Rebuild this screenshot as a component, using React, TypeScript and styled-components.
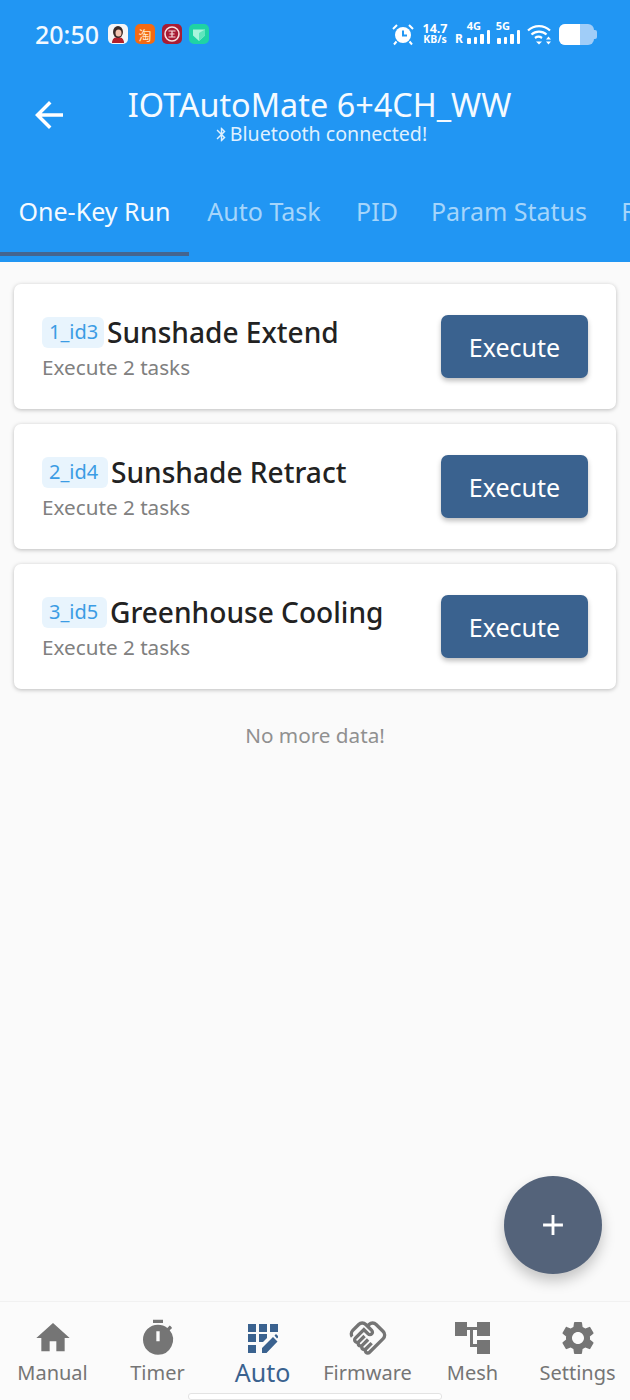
import React from "react";
import styled, { createGlobalStyle } from "styled-components";
import { MdHome, MdTimer, MdOutlineHandshake, MdSettings, MdArrowBack, MdBluetooth, MdAdd } from "react-icons/md";

const Global = createGlobalStyle`
  html, body { margin: 0; padding: 0; background: #fafafa; }
  * { box-sizing: border-box; }
  body { font-family: "Noto Sans", "Open Sans", sans-serif; }
`;

const Page = styled.div`
  position: relative;
  width: 630px;
  height: 1400px;
  display: flex;
  flex-direction: column;
  overflow: hidden;
  background: #fafafa;
`;

const Header = styled.header`
  height: 262px;
  flex: none;
  background: #2196f3;
  color: #fff;
  display: flex;
  flex-direction: column;
`;

const StatusBar = styled.div`
  height: 68px;
  margin-bottom: 2px;
  padding: 0 34px 0 35px;
  display: flex;
  align-items: center;
  justify-content: space-between;
`;

const StatusGroup = styled.div<{ $gap: number }>`
  display: flex;
  align-items: center;
  gap: ${(p) => p.$gap}px;
`;

const Clock = styled.span`
  width: 66px;
  font-size: 25px;
  font-weight: 500;
  color: #f2f9ff;
  white-space: nowrap;
`;

const AppBadge = styled.span<{ $bg: string; $fg: string }>`
  width: 20px;
  height: 20px;
  border-radius: 5px;
  display: flex;
  align-items: center;
  justify-content: center;
  overflow: hidden;
  background: ${(p) => p.$bg};
  color: ${(p) => p.$fg};
  font-size: 13px;
  font-family: "Noto Sans CJK SC", sans-serif;
  line-height: 1;
`;

const Speed = styled.div`
  width: 26px;
  display: flex;
  flex-direction: column;
  align-items: center;
  font-weight: 700;
  line-height: 11px;
  white-space: nowrap;
`;

const SpeedLine = styled.span<{ $big?: boolean }>`
  font-size: ${(p) => (p.$big ? 12.6 : 10.5)}px;
`;

const Signal = styled.div<{ $w: number }>`
  position: relative;
  width: ${(p) => p.$w}px;
  height: 24px;
  display: flex;
  align-items: flex-end;
  justify-content: flex-end;
  gap: 3px;
  padding-bottom: 2px;
`;

const SignalLabel = styled.span<{ $right: number }>`
  position: absolute;
  right: ${(p) => p.$right}px;
  top: -1px;
  font-size: 11px;
  font-weight: 700;
  line-height: 10px;
`;

const RoamMark = styled.span`
  position: absolute;
  left: 0;
  bottom: 2px;
  font-size: 12px;
  font-weight: 700;
  line-height: 10px;
`;

const SignalBar = styled.span<{ $h: number }>`
  width: 3.5px;
  height: ${(p) => p.$h}px;
  background: #fff;
  border-radius: 1px;
`;

const Battery = styled.div`
  position: relative;
  width: 35px;
  height: 21px;
  margin-right: 2px;
  border-radius: 6px;
  background: #a0cdf8;

  &::after {
    content: "";
    position: absolute;
    right: -3px;
    top: 6px;
    width: 3px;
    height: 9px;
    border-radius: 0 2px 2px 0;
    background: #a0cdf8;
  }
`;

const BatteryFill = styled.div`
  width: 21px;
  height: 100%;
  border-radius: 6px 0 0 6px;
  background: #fff;
`;

const AppBar = styled.div`
  height: 86px;
  position: relative;
  display: flex;
  flex-direction: column;
  align-items: center;
  padding-top: 14px;
`;

const BackButton = styled.span`
  position: absolute;
  left: 28px;
  top: 24px;
  display: flex;
  font-size: 42px;
`;

const Title = styled.div`
  font-size: 32.4px;
  line-height: 41px;
  margin-left: 9px;
  color: #f4faff;
  white-space: nowrap;
`;

const Subtitle = styled.div`
  font-size: 19.6px;
  line-height: 18px;
  display: flex;
  align-items: center;
  margin-left: 10px;
  color: #dff0fe;
`;

const Tabs = styled.nav`
  flex: 1;
  display: flex;
  overflow: hidden;
  padding-top: 24px;
`;

const Tab = styled.span<{ $active?: boolean; $w: number }>`
  flex: none;
  width: ${(p) => p.$w}px;
  height: 76px;
  padding-top: 14px;
  text-align: center;
  font-size: 25px;
  line-height: 34px;
  white-space: nowrap;
  color: ${(p) => (p.$active ? "#f4faff" : "#a5d5fb")};
  border-bottom: 4px solid ${(p) => (p.$active ? "#45658f" : "transparent")};
`;

const List = styled.main`
  flex: 1;
  padding: 22px 14px 0;
  display: flex;
  flex-direction: column;
  gap: 15px;
`;

const Card = styled.section`
  height: 125px;
  background: #fff;
  border-radius: 7px;
  box-shadow: 0 1px 4px rgba(0, 0, 0, 0.25);
  padding: 0 28px;
  display: flex;
  align-items: center;
  justify-content: space-between;
`;

const CardText = styled.div`
  display: flex;
  flex-direction: column;
  padding-top: 1px;
`;

const CardHead = styled.div`
  display: flex;
  align-items: center;
  gap: 3px;
  margin-top: 1px;
`;

const Tag = styled.span<{ $w: number }>`
  width: ${(p) => p.$w}px;
  height: 31px;
  padding: 0 7px;
  border-radius: 6px;
  background: #e8f4fd;
  color: #3b9ce4;
  font-size: 20px;
  line-height: 30px;
  white-space: nowrap;
`;

const CardTitle = styled.span`
  font-size: 28.1px;
  font-weight: 500;
  color: #222;
  line-height: 36px;
  white-space: nowrap;
`;

const CardSub = styled.span`
  font-size: 20.7px;
  color: #808080;
  line-height: 28px;
  margin-top: 3px;
`;

const ExecuteButton = styled.button`
  width: 147px;
  height: 63px;
  border: 0;
  border-radius: 7px;
  background: #3a628f;
  color: #fff;
  font: inherit;
  font-size: 25px;
  box-shadow: 0 3px 5px rgba(0, 0, 0, 0.25);
`;

const EndNote = styled.div`
  margin-top: 17px;
  text-align: center;
  font-size: 20.7px;
  line-height: 28px;
  color: #909090;
`;

const Fab = styled.button`
  position: absolute;
  left: 504px;
  top: 1176px;
  width: 98px;
  height: 98px;
  border: 0;
  border-radius: 50%;
  background: #54637a;
  color: #fff;
  font-size: 34px;
  display: flex;
  align-items: center;
  justify-content: center;
  box-shadow: 0 7px 14px rgba(0, 0, 0, 0.22);
`;

const BottomNav = styled.nav`
  height: 99px;
  flex: none;
  border-top: 1px solid #f1f1f1;
  display: grid;
  grid-template-columns: repeat(6, 105px);
  background: #fbfbfb;
`;

const NavItem = styled.div<{ $active?: boolean }>`
  display: flex;
  flex-direction: column;
  align-items: center;
  padding-top: 16px;
  color: ${(p) => (p.$active ? "#3a628f" : "#757575")};
`;

const NavIcon = styled.span`
  height: 40px;
  display: flex;
  align-items: center;
  justify-content: center;
  font-size: 40px;
`;

const NavLabel = styled.span<{ $active?: boolean }>`
  font-size: ${(p) => (p.$active ? 25 : 20)}px;
  line-height: 30px;
  margin-top: ${(p) => (p.$active ? -1 : 0)}px;
  white-space: nowrap;
`;

const HomeBar = styled.div`
  position: absolute;
  left: 188px;
  top: 1393px;
  width: 254px;
  height: 7px;
  border: 1px solid #e3e3e3;
  border-radius: 3px;
  background: #fff;
`;

const AvatarGlyph = () => (
  <svg width="20" height="20" viewBox="0 0 20 20">
    <path d="M4 19c0-4 2.500-6 6-6s6 2 6 6z" fill="#b3202a" />
    <ellipse cx="10" cy="8" rx="5" ry="6" fill="#3a2a28" />
    <ellipse cx="10.500" cy="9" rx="3" ry="3.500" fill="#f3c4b0" />
  </svg>
);

const BankGlyph = () => (
  <svg width="20" height="20" viewBox="0 0 20 20" fill="none" stroke="#f7dfe0">
    <circle cx="10" cy="10" r="7" strokeWidth="1.600" />
    <path d="M6.500 7h7M6.500 13h7M7.500 10h5M10 7v6" strokeWidth="1.200" />
  </svg>
);

const GemGlyph = () => (
  <svg width="20" height="20" viewBox="0 0 20 20">
    <path d="M4 5.500h12v6L10 17l-6-5.500z" fill="#a8f5dc" />
    <path d="M10 9l6-3.500v6L10 17z" fill="#5fe6bd" />
  </svg>
);

const AlarmGlyph = () => (
  <svg width="24" height="24" viewBox="0 0 24 24">
    <circle cx="12" cy="13" r="8" fill="#fff" />
    <path d="M12 8.500V13.500h4" fill="none" stroke="#2196f3" strokeWidth="2" />
    <path d="M2 7l4-4M22 7l-4-4M5.500 19.500l-2.500 3M18.500 19.500l2.500 3" fill="none" stroke="#fff" strokeWidth="2" />
  </svg>
);

const WifiGlyph = () => (
  <svg width="25" height="22" viewBox="0 0 25 22" fill="none" stroke="#fff" strokeWidth="2.200">
    <path d="M1 7.500a16 16 0 0 1 22 0" />
    <path d="M4.500 11.500a11 11 0 0 1 15 0" />
    <path d="M8 15a6 6 0 0 1 7 0" />
    <path d="M9 18.500h6l-3 3z" fill="#fff" stroke="none" />
    <path d="M21.500 13.500l2.500 3h-5zM21.500 21.500l2.500-3h-5z" fill="#fff" stroke="none" />
  </svg>
);

const GridPenIcon = () => (
  <svg width="30" height="29" viewBox="0 0 30 29" fill="currentColor">
    <rect x="0" y="0" width="8" height="8" />
    <rect x="11" y="0" width="8" height="8" />
    <rect x="22" y="0" width="8" height="8" />
    <rect x="0" y="10" width="8" height="8" />
    <path d="M11 10h8v4l-4 4h-4z" />
    <rect x="0" y="21" width="8" height="8" />
    <path d="M14 29v-5L25 13l4.500 4.500L18.500 29zM26.500 11.500l1.500-1.500 2 2-0 1.500-1 1z" />
  </svg>
);

const MeshIcon = () => (
  <svg width="35" height="32" viewBox="0 0 35 32" fill="currentColor">
    <rect x="0" y="0" width="12" height="14" />
    <rect x="22" y="0" width="13" height="14" />
    <rect x="22" y="18" width="13" height="14" />
    <rect x="12" y="5" width="10" height="3" />
    <rect x="15" y="5" width="3" height="20" />
    <rect x="15" y="22" width="7" height="3" />
  </svg>
);

const bars = [6, 7, 10, 14];

const SignalMeter = ({ label, roaming }: { label: string; roaming?: boolean }) => (
  <Signal $w={roaming ? 35 : 23}>
    <SignalLabel $right={roaming ? 9 : 10}>{label}</SignalLabel>
    {roaming && <RoamMark>R</RoamMark>}
    {bars.map((h) => (
      <SignalBar key={h} $h={h} />
    ))}
  </Signal>
);

const tasks = [
  { tag: "1_id3", tagWidth: 62, name: "Sunshade Extend" },
  { tag: "2_id4", tagWidth: 66, name: "Sunshade Retract" },
  { tag: "3_id5", tagWidth: 65, name: "Greenhouse Cooling" },
];

const tabs = [
  { label: "One-Key Run", w: 189, active: true },
  { label: "Auto Task", w: 150 },
  { label: "PID", w: 76 },
  { label: "Param Status", w: 188 },
  { label: "R", w: 52 },
];

const navItems = [
  { label: "Manual", icon: <MdHome /> },
  { label: "Timer", icon: <MdTimer /> },
  { label: "Auto", icon: <GridPenIcon />, active: true },
  { label: "Firmware", icon: <MdOutlineHandshake /> },
  { label: "Mesh", icon: <MeshIcon /> },
  { label: "Settings", icon: <MdSettings /> },
];

export default function App() {
  return (
    <Page>
      <Global />
      <Header>
        <StatusBar>
          <StatusGroup $gap={7}>
            <Clock>20:50</Clock>
            <AppBadge $bg="#f6f6f6" $fg="#8c2b2b"><AvatarGlyph /></AppBadge>
            <AppBadge $bg="#f46a12" $fg="#ffe9c9">淘</AppBadge>
            <AppBadge $bg="#a81c34" $fg="#ffe3e3"><BankGlyph /></AppBadge>
            <AppBadge $bg="#1fd3a4" $fg="#e8fff8"><GemGlyph /></AppBadge>
          </StatusGroup>
          <StatusGroup $gap={7}>
            <AlarmGlyph />
            <Speed>
              <SpeedLine $big>14.7</SpeedLine>
              <SpeedLine>KB/s</SpeedLine>
            </Speed>
            <SignalMeter label="4G" roaming />
            <SignalMeter label="5G" />
            <WifiGlyph />
            <Battery>
              <BatteryFill />
            </Battery>
          </StatusGroup>
        </StatusBar>
        <AppBar>
          <BackButton>
            <MdArrowBack />
          </BackButton>
          <Title>IOTAutoMate 6+4CH_WW</Title>
          <Subtitle>
            <MdBluetooth size={17} />
            Bluetooth connected!
          </Subtitle>
        </AppBar>
        <Tabs>
          {tabs.map((t) => (
            <Tab key={t.label} $w={t.w} $active={t.active}>
              {t.label}
            </Tab>
          ))}
        </Tabs>
      </Header>
      <List>
        {tasks.map((t) => (
          <Card key={t.tag}>
            <CardText>
              <CardHead>
                <Tag $w={t.tagWidth}>{t.tag}</Tag>
                <CardTitle>{t.name}</CardTitle>
              </CardHead>
              <CardSub>Execute 2 tasks</CardSub>
            </CardText>
            <ExecuteButton>Execute</ExecuteButton>
          </Card>
        ))}
        <EndNote>No more data!</EndNote>
      </List>
      <Fab>
        <MdAdd />
      </Fab>
      <BottomNav>
        {navItems.map((n) => (
          <NavItem key={n.label} $active={n.active}>
            <NavIcon>{n.icon}</NavIcon>
            <NavLabel $active={n.active}>{n.label}</NavLabel>
          </NavItem>
        ))}
      </BottomNav>
      <HomeBar />
    </Page>
  );
}
